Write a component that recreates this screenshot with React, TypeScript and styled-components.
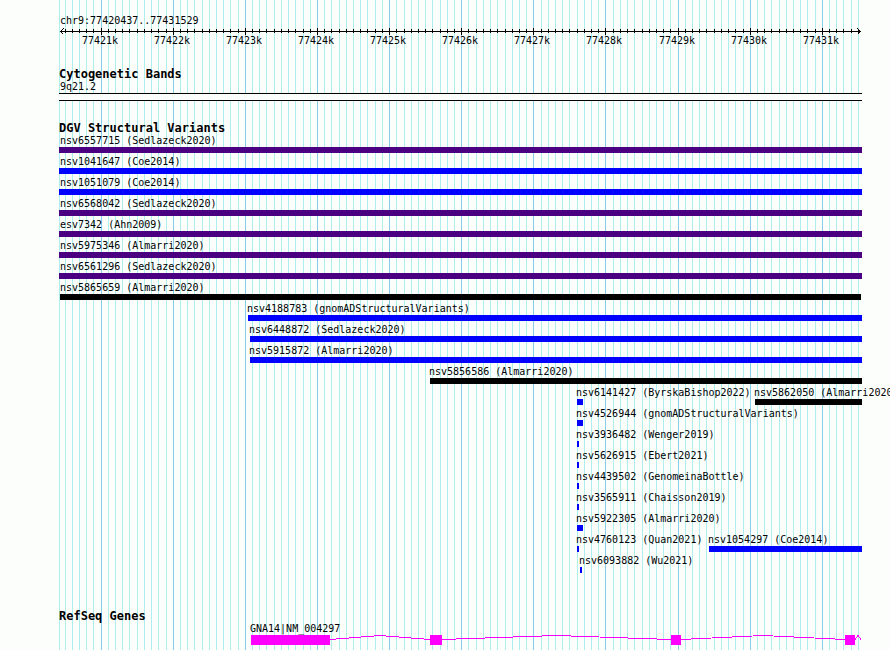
import React from "react";
import styled, { createGlobalStyle } from "styled-components";

const PLOT_UNITS = 803;
const REGION_START = 77420437;
const REGION_END = 77431529;

const GlobalStyle = createGlobalStyle`
  html, body { margin: 0; padding: 0; background: #fcfefc; }
  body { overflow: hidden; }
`;

const Page = styled.main`
  position: relative;
  box-sizing: border-box;
  min-height: 100vh;
  padding: 15px 28px 5px 59px;
  overflow: hidden;
  background: #fcfefc;
  color: #000;
  font-family: "DejaVu Sans Mono", monospace;
  font-size: 10px;
  line-height: 12px;
`;

const Backdrop = styled.div`
  position: absolute;
  inset: 0 28px 0 59px;
`;

const Drawing = styled.svg<{ $height: string }>`
  display: block;
  width: 100%;
  height: ${(p) => p.$height};
  shape-rendering: crispEdges;
`;

const Content = styled.div`
  position: relative;
`;

const RegionName = styled.h1`
  margin: 0 0 1px;
  padding-left: 1px;
  font: inherit;
`;

const Lane = styled.div`
  display: grid;
  grid-template-columns: minmax(0, 1fr);
`;

const TickLabel = styled.span`
  grid-area: 1 / 1;
  white-space: nowrap;
`;

const Track = styled.section<{ $gap: number }>`
  margin-top: ${(p) => p.$gap}px;
`;

const TrackTitle = styled.h2`
  margin: 0;
  font-size: 12px;
  line-height: 14px;
  font-weight: 700;
  white-space: nowrap;
`;

const Label = styled.span<{ $indent: number }>`
  display: block;
  margin-left: ${(p) => p.$indent}px;
  white-space: nowrap;
`;

const GeneLabel = styled(Label)`
  position: relative;
  z-index: 1;
`;

const Band = styled.div`
  height: 6px;
  border: solid #000;
  border-width: 1px 0;
  background: #fcfefc;
`;

const Variants = styled.div`
  display: grid;
  gap: 3px;
`;

const FeatureBox = styled.div`
  grid-area: 1 / 1;
  min-width: 0;
`;

const Bar = styled.div<{ $color: string }>`
  height: 6px;
  background: ${(p) => p.$color};
`;

const percent = (units: number) => `${(units / PLOT_UNITS) * 100}%`;

const toUnits = (bp: number) =>
  Math.round(1 + ((bp - REGION_START) * 800) / (REGION_END - REGION_START));

const ticks = Array.from({ length: 111 }, (_, i) => {
  const bp = 77420500 + i * 100;
  return { bp, x: toUnits(bp), major: bp % 1000 === 0 };
});

const PURPLE = "#4b0082";
const BLUE = "#0000ff";
const BLACK = "#000000";

type Feature = { name: string; from: number; to: number; color: string };
const f = (name: string, from: number, to: number, color: string): Feature => ({ name, from, to, color });

const variantRows: Feature[][] = [
  [f("nsv6557715 (Sedlazeck2020)", 0, 803, PURPLE)],
  [f("nsv1041647 (Coe2014)", 0, 803, BLUE)],
  [f("nsv1051079 (Coe2014)", 0, 803, BLUE)],
  [f("nsv6568042 (Sedlazeck2020)", 0, 803, PURPLE)],
  [f("esv7342 (Ahn2009)", 0, 803, PURPLE)],
  [f("nsv5975346 (Almarri2020)", 0, 803, PURPLE)],
  [f("nsv6561296 (Sedlazeck2020)", 0, 803, PURPLE)],
  [f("nsv5865659 (Almarri2020)", 1, 802, BLACK)],
  [f("nsv4188783 (gnomADStructuralVariants)", 189, 803, BLUE)],
  [f("nsv6448872 (Sedlazeck2020)", 191, 803, BLUE)],
  [f("nsv5915872 (Almarri2020)", 191, 803, BLUE)],
  [f("nsv5856586 (Almarri2020)", 371, 803, BLACK)],
  [f("nsv6141427 (ByrskaBishop2022)", 518, 524, BLUE), f("nsv5862050 (Almarri2020)", 696, 803, BLACK)],
  [f("nsv4526944 (gnomADStructuralVariants)", 518, 524, BLUE)],
  [f("nsv3936482 (Wenger2019)", 518, 520, BLUE)],
  [f("nsv5626915 (Ebert2021)", 518, 520, BLUE)],
  [f("nsv4439502 (GenomeinaBottle)", 518, 520, BLUE)],
  [f("nsv3565911 (Chaisson2019)", 518, 520, BLUE)],
  [f("nsv5922305 (Almarri2020)", 518, 524, BLUE)],
  [f("nsv4760123 (Quan2021)", 518, 520, BLUE), f("nsv1054297 (Coe2014)", 650, 803, BLUE)],
  [f("nsv6093882 (Wu2021)", 521, 523, BLUE)],
];

const exons = [
  [192, 271],
  [371, 383],
  [612, 622],
  [786, 796],
];

const introns = [
  [271, 371],
  [383, 612],
  [622, 786],
  [796, 802],
];

function Gridlines() {
  return (
    <Backdrop aria-hidden="true">
      <Drawing $height="100%" viewBox={`0 0 ${PLOT_UNITS} 1`} preserveAspectRatio="none">
        <rect x={0} y={0} width={1} height={1} fill="#afeeee" />
        {ticks.map((t) => (
          <rect key={t.bp} x={t.x} y={0} width={1} height={1} fill={t.major ? "#87ceeb" : "#afeeee"} />
        ))}
      </Drawing>
    </Backdrop>
  );
}

function Ruler() {
  return (
    <>
      <Drawing $height="7px" viewBox={`0 0 ${PLOT_UNITS} 7`} preserveAspectRatio="none" aria-hidden="true">
        <rect x={1} y={3} width={801} height={1} />
        {ticks.map((t) => (
          <rect key={t.bp} x={t.x} y={t.major ? 0 : 1} width={1} height={t.major ? 7 : 4} />
        ))}
        <path d="M4.5 0.5L1.5 3.5L4.5 6.5M798.5 0.5L801.5 3.5L798.5 6.5" fill="none" stroke="#000" />
      </Drawing>
      <Lane>
        {ticks
          .filter((t) => t.major)
          .map((t) => (
            <TickLabel key={t.bp} style={{ marginLeft: `calc(${percent(t.x)} - 19px)` }}>
              {t.bp / 1000}k
            </TickLabel>
          ))}
      </Lane>
    </>
  );
}

function Variant({ feature }: { feature: Feature }) {
  return (
    <FeatureBox
      style={{ marginLeft: percent(feature.from), marginRight: percent(PLOT_UNITS - feature.to) }}
    >
      <Label $indent={Math.max(1 - feature.from, feature.from > 1 ? -1 : 0)}>{feature.name}</Label>
      <Bar $color={feature.color} />
    </FeatureBox>
  );
}

function Gene() {
  return (
    <>
      <Lane>
        <FeatureBox style={{ marginLeft: percent(192) }}>
          <GeneLabel $indent={-1}>GNA14|NM_004297</GeneLabel>
        </FeatureBox>
      </Lane>
      <Drawing $height="10px" viewBox={`0 0 ${PLOT_UNITS} 10`} preserveAspectRatio="none" aria-hidden="true">
        {introns.map(([a, b]) => (
          <polyline
            key={a}
            points={`${a},4.5 ${(a + b) / 2},0.5 ${b},4.5`}
            fill="none"
            stroke="#ff00ff"
          />
        ))}
        {exons.map(([a, b]) => (
          <rect key={a} x={a} y={0} width={b - a} height={10} fill="#ff00ff" />
        ))}
      </Drawing>
    </>
  );
}

export default function App() {
  return (
    <>
      <GlobalStyle />
      <Page>
        <Gridlines />
        <Content>
          <RegionName>chr9:77420437..77431529</RegionName>
          <Ruler />
          <Track $gap={20}>
            <TrackTitle>Cytogenetic Bands</TrackTitle>
            <Label $indent={1}>9q21.2</Label>
            <Band />
          </Track>
          <Track $gap={20}>
            <TrackTitle>DGV Structural Variants</TrackTitle>
            <Variants>
              {variantRows.map((row) => (
                <Lane key={row[0].name}>
                  {row.map((feature) => (
                    <Variant key={feature.name} feature={feature} />
                  ))}
                </Lane>
              ))}
            </Variants>
          </Track>
          <Track $gap={36}>
            <TrackTitle>RefSeq Genes</TrackTitle>
            <Gene />
          </Track>
        </Content>
      </Page>
    </>
  );
}
